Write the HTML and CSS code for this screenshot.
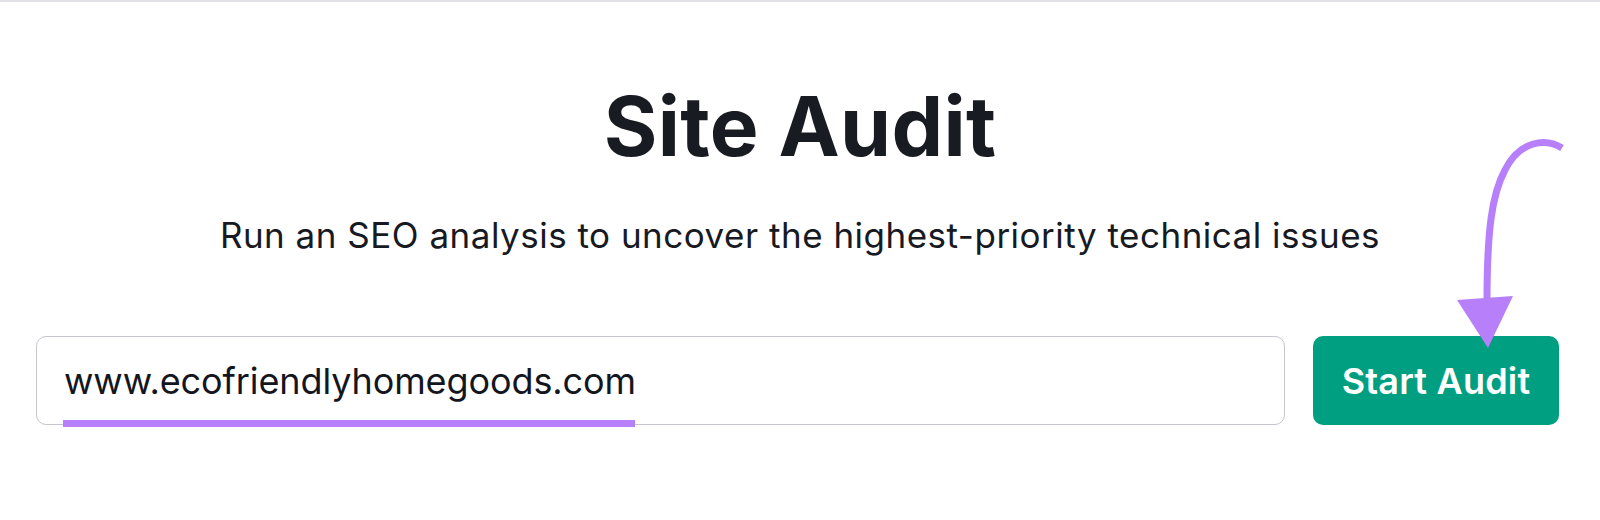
FILE: index.html
```html
<!DOCTYPE html>
<html lang="en">
<head>
    <meta charset="UTF-8">
    <title>Site Audit</title>
    <link rel="stylesheet" href="styles.css">
</head>
<body>
    <div class="stage">
        <h1 class="title">Site Audit</h1>
        <p class="subtitle">Run an SEO analysis to uncover the highest-priority technical issues</p>

        <div class="audit-form">
            <div class="domain-field">
                <span class="domain-text">www.ecofriendlyhomegoods.com</span>
                <span class="domain-mark"></span>
            </div>
            <button class="start-btn">Start Audit</button>
        </div>

        <!-- annotation arrow pointing at the button -->
        <svg class="arrow" width="130" height="230" viewBox="0 0 130 230">
            <path d="M122,18 C106,8 80,10 65,40 C52,64 47,100 47,172" fill="none" stroke="#b77ffa" stroke-width="7" stroke-linecap="butt"/>
            <polygon points="17,170 73,166 48,218" fill="#b77ffa"/>
        </svg>
    </div>
</body>
</html>
```

FILE: styles.css
```css
body {
    margin: 0;
    background: #ffffff;
    font-family: Inter, "Noto Sans", Arial, sans-serif;
    color: #191b23;
}
.stage {
    position: relative;
    height: 518px;
    border-top: 2px solid #e1e1e9;
    display: flex;
    flex-direction: column;
    align-items: center;
}
.title {
    margin: 84px 0 0;
    font-size: 82px;
    line-height: 1;
    font-weight: 700;
    letter-spacing: 0.3px;
}
.subtitle {
    margin: 50px 0 0;
    font-size: 35px;
    line-height: 1;
    font-weight: 400;
    letter-spacing: 0.5px;
    color: #171a22;
}
.audit-form {
    align-self: stretch;
    display: flex;
    gap: 28px;
    margin-top: 83px;
    padding: 0 41px 0 36px;
}
.domain-field {
    position: relative;
    flex: 1;
    height: 89px;
    box-sizing: border-box;
    border: 1.5px solid #c5c6cd;
    border-radius: 10px;
    padding-left: 27px;
    display: flex;
    align-items: center;
}
.domain-text {
    font-size: 36px;
    letter-spacing: -0.1px;
    color: #14161d;
}
.domain-mark {
    position: absolute;
    left: 26px;
    top: 83px;
    width: 572px;
    height: 7px;
    background: #b77ffa;
}
.start-btn {
    width: 246px;
    height: 89px;
    border: none;
    border-radius: 10px;
    background: #009f81;
    color: #ffffff;
    font-family: Inter, "Noto Sans", Arial, sans-serif;
    font-size: 36px;
    font-weight: 600;
    letter-spacing: 0.2px;
    cursor: pointer;
}
.arrow {
    position: absolute;
    left: 1440px;
    top: 128px;
}
```
